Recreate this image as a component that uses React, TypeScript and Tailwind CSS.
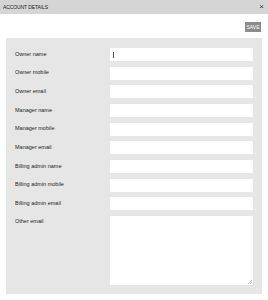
const fields = [
  "Owner name",
  "Owner mobile",
  "Owner email",
  "Manager name",
  "Manager mobile",
  "Manager email",
  "Billing admin name",
  "Billing admin mobile",
  "Billing admin email",
];

export default function App() {
  return (
    <div className="h-[300px] w-[268px] bg-white font-['Liberation_Sans',Arial,sans-serif] text-[#222]">
      <div className="flex h-[14px] items-center justify-between bg-[#d5d5d5] pl-[3px] pr-[4px]">
        <span className="text-[5px] leading-none tracking-[-0.1px]">ACCOUNT DETAILS</span>
        <span className="text-[8px] leading-none text-[#333]">×</span>
      </div>

      <div className="flex justify-end pr-[7px] pt-[8px]">
        <button className="flex h-[10px] w-[16px] items-center justify-center bg-[#8b8b8b] text-[5px] leading-none text-white">
          SAVE
        </button>
      </div>

      <div className="mx-[6px] mt-[6px] flex h-[256px] flex-col gap-[5.67px] bg-[#e6e6e6] pb-[9px] pl-[9px] pr-[9px] pt-[10px]">
        {fields.map((label, i) => (
          <div key={label} className="flex h-[13px] items-center">
            <span className="w-[95px] text-[5.5px] leading-none">{label}</span>
            <div className="relative h-full flex-1 bg-white">
              {i === 0 && <span className="absolute left-[3px] top-[3.5px] h-[6px] w-px bg-[#555]" />}
            </div>
          </div>
        ))}
        <div className="flex flex-1">
          <span className="w-[95px] pt-[3px] text-[5.5px] leading-none">Other email</span>
          <div className="relative flex-1 bg-white">
            <svg className="absolute bottom-[1px] right-[1px]" width="4" height="4" viewBox="0 0 4 4">
              <path d="M4 0 L0 4 M4 2 L2 4" stroke="#999" strokeWidth="0.6" />
            </svg>
          </div>
        </div>
      </div>
    </div>
  );
}
